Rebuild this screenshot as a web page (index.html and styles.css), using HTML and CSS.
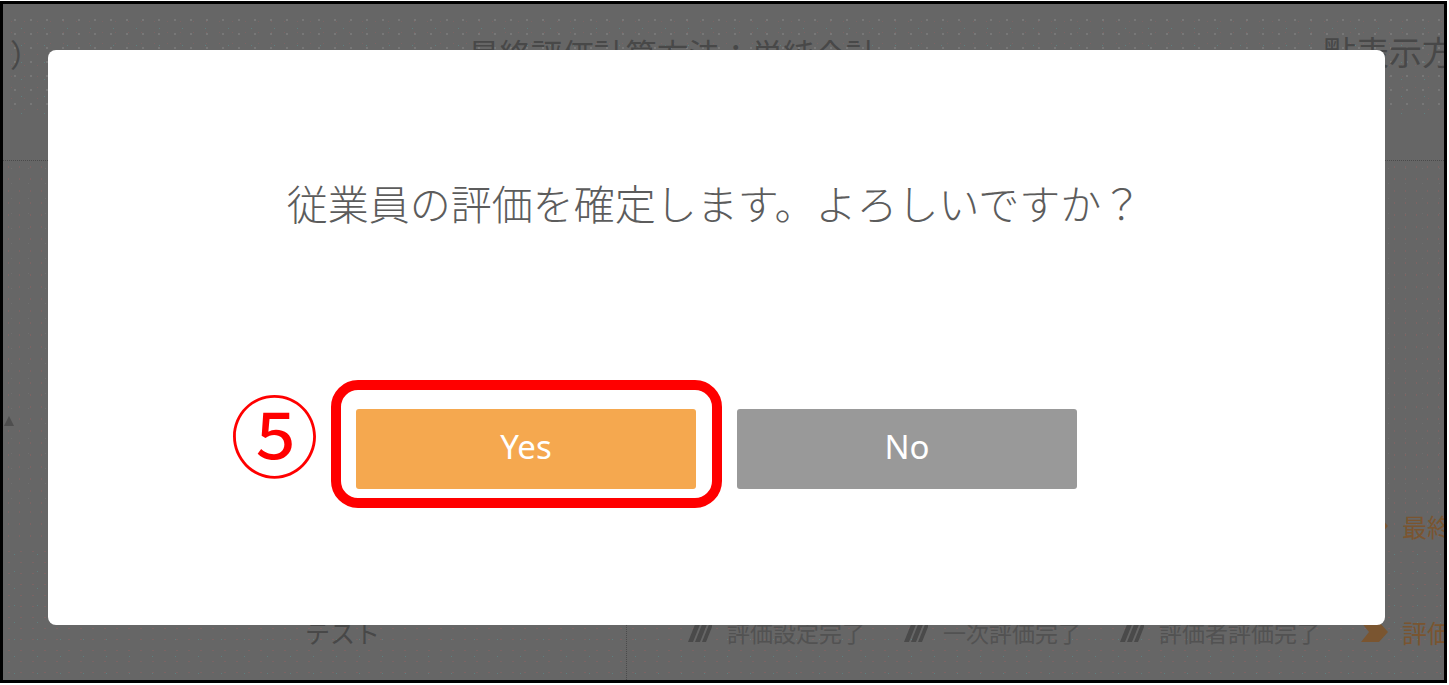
FILE: index.html
```html
<!DOCTYPE html>
<html lang="ja">
<head>
  <meta charset="UTF-8" />
  <title>評価確定</title>
  <link rel="stylesheet" href="styles.css">
</head>
<body>
  <div class="screen">
    <div class="page">
      <div class="head">
        <span class="head-paren">）</span>
        <span class="head-calc">最終評価計算方法：単純合計</span>
        <span class="head-view">點表示方法</span>
      </div>
      <div class="middle">
        <div class="sort-mark"></div>
      </div>
      <div class="row-final">
        <svg class="chev" width="30" height="24" viewBox="0 0 30 24"><path d="M2 2h18l9 10-9 10H2l8-10z" fill="#7a5530"/></svg>
        <span class="step-current">最終</span>
      </div>
      <div class="row-test">
        <div class="cell-name">テスト</div>
        <div class="cell-steps">
          <span class="step"><svg class="hatch" width="24" height="20" viewBox="0 0 24 20"><path d="M0 20 8 0h5L5 20zM7 20 15 0h5l-8 20zM14 20 22 0h2v5l-6 15z" fill="#4a4a4a"/></svg>評価設定完了</span>
          <span class="step"><svg class="hatch" width="24" height="20" viewBox="0 0 24 20"><path d="M0 20 8 0h5L5 20zM7 20 15 0h5l-8 20zM14 20 22 0h2v5l-6 15z" fill="#4a4a4a"/></svg>一次評価完了</span>
          <span class="step"><svg class="hatch" width="24" height="20" viewBox="0 0 24 20"><path d="M0 20 8 0h5L5 20zM7 20 15 0h5l-8 20zM14 20 22 0h2v5l-6 15z" fill="#4a4a4a"/></svg>評価者評価完了</span>
          <span class="step-now"><svg class="chev" width="30" height="24" viewBox="0 0 30 24"><path d="M2 2h18l9 10-9 10H2l8-10z" fill="#7a5530"/></svg><span class="step-current">評価</span></span>
        </div>
      </div>
    </div>

    <div class="overlay">
      <div class="modal">
        <p class="modal-text">従業員の評価を確定します。よろしいですか？</p>
        <div class="modal-actions">
          <span class="marker">⑤</span>
          <div class="highlight">
            <button class="btn btn-yes">Yes</button>
          </div>
          <button class="btn btn-no">No</button>
        </div>
      </div>
    </div>
  </div>
</body>
</html>
```

FILE: styles.css
```css
* {
  box-sizing: border-box;
}

body {
  margin: 0;
  padding: 1px 2px 2px 0;
  background-color: #fff;
  font-family: "Noto Sans CJK JP", "Liberation Sans", sans-serif;
}

.screen {
  position: relative;
  height: 682px;
  border: 3px solid #000;
  background-color: #666;
  overflow: hidden;
}

.page {
  display: flex;
  flex-direction: column;
  height: 100%;
  color: #484848;
}

.head {
  display: flex;
  align-items: flex-start;
  height: 157px;
  padding: 27px 0 0 7px;
  font-size: 31.5px;
  line-height: 44px;
  white-space: nowrap;
  border-bottom: 1px dotted #4a4a4a;
  background-image:
    linear-gradient(#666, #666),
    linear-gradient(#666, #666),
    radial-gradient(circle, #787878 0.7px, transparent 1px),
    radial-gradient(circle, #7b6464 0.7px, transparent 1px),
    radial-gradient(circle, #5f7f7f 0.7px, transparent 1px);
  background-size: 100% 8px, 100% 50px, 16px 14px, 13px 11px, 23px 17px;
  background-position: 0 0, 0 112px, 4px 9px, 2px 12px, 7px 16px;
  background-repeat: no-repeat, no-repeat, repeat, repeat, repeat;
}

.head-paren {
  flex: none;
  width: 458px;
}

.head-calc {
  flex: none;
  width: 855px;
}

.head-view {
  flex: none;
  margin-top: -2px;
  font-size: 33px;
}

.middle {
  height: 345px;
  padding-top: 255px;
  background-image:
    radial-gradient(circle, #7b6464 0.8px, transparent 1px),
    radial-gradient(circle, #6f6f6f 0.7px, transparent 1px);
  background-size: 11px 12px, 17px 15px;
}

.sort-mark {
  width: 0;
  height: 0;
  margin-left: 1px;
  border-left: 5px solid transparent;
  border-right: 5px solid transparent;
  border-bottom: 10px solid #4e4e4e;
}

.chev {
  flex: none;
}

.hatch {
  flex: none;
}

.row-final {
  display: flex;
  align-items: center;
  gap: 13px;
  height: 40px;
  padding-left: 1356px;
  white-space: nowrap;
  background-image: radial-gradient(circle, #7b6464 0.8px, transparent 1px);
  background-size: 11px 12px;
}

.step-current {
  flex: none;
  font-size: 25px;
  line-height: 30px;
  color: #7a5530;
}

.row-test {
  display: flex;
  flex: 1;
  white-space: nowrap;
  background-image:
    radial-gradient(circle, #7b6464 0.8px, transparent 1px),
    radial-gradient(circle, #5f7f7f 0.8px, transparent 1px);
  background-size: 12px 11px, 23px 17px;
}

.cell-name {
  flex: none;
  width: 624px;
  padding: 68px 0 0 302px;
  font-size: 25px;
  line-height: 36px;
  color: #484848;
  border-right: 1px dotted #4a4a4a;
}

.cell-steps {
  display: flex;
  align-items: flex-start;
  padding: 71px 0 0 61px;
  font-size: 23px;
  line-height: 30px;
  color: #525252;
}

.step {
  display: flex;
  flex: none;
  align-items: center;
  gap: 15px;
  margin-right: 39px;
}

.step-now {
  display: flex;
  flex: none;
  align-items: center;
  gap: 13px;
}

.overlay {
  position: absolute;
  top: 0;
  left: 0;
  right: 0;
  bottom: 0;
  padding: 46px 0 0 45px;
}

.modal {
  width: 1337px;
  height: 575px;
  padding-top: 121px;
  border-radius: 8px;
  background-color: #fff;
  text-align: center;
}

.modal-text {
  margin: 0 4px 0 0;
  font-size: 41px;
  font-weight: 300;
  line-height: 62px;
  color: #5c5c5c;
}

.modal-actions {
  display: flex;
  justify-content: center;
  gap: 41px;
  position: relative;
  margin-top: 176px;
}

.btn {
  width: 340px;
  height: 80px;
  padding: 0 0 6px;
  border: none;
  border-radius: 3px;
  font-family: "Noto Sans", "Liberation Sans", sans-serif;
  font-size: 33px;
  color: #fff;
}

.btn-yes {
  background-color: #f5a84f;
}

.btn-no {
  background-color: #999;
}

/* 操作手順の注釈（ボタンの上に重ねる） */
.highlight {
  position: relative;
}

.highlight::after {
  content: "";
  position: absolute;
  top: -29px;
  left: -25px;
  right: -26px;
  bottom: -19px;
  border: 10px solid #f00;
  border-radius: 27px;
}

.marker {
  position: absolute;
  top: -37px;
  left: 182px;
  font-size: 89px;
  line-height: 120px;
  color: #f00;
}
```
